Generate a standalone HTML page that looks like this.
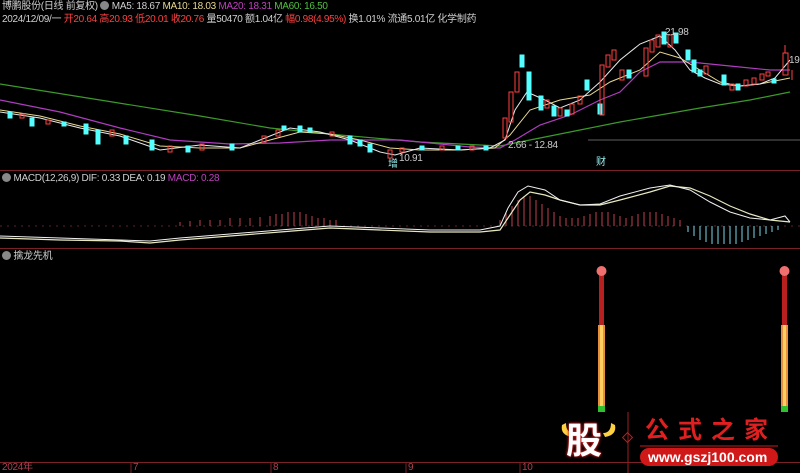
<!DOCTYPE html>
<html><head><meta charset="utf-8"><style>
html,body{margin:0;padding:0;background:#000;width:800px;height:473px;overflow:hidden;font-family:"Liberation Sans","Noto Sans CJK SC",sans-serif;}
.t{position:absolute;font-size:10px;white-space:nowrap;line-height:12px;letter-spacing:-0.3px}
</style></head><body>
<div style="position:relative;width:800px;height:473px">
<svg width="800" height="473" style="position:absolute;left:0;top:0">
<line x1="0" y1="170.5" x2="800" y2="170.5" stroke="#7a2028"/>
<line x1="0" y1="248.5" x2="800" y2="248.5" stroke="#7a2028"/>
<line x1="0" y1="462.5" x2="800" y2="462.5" stroke="#7a2028"/>
<line x1="628" y1="412" x2="628" y2="473" stroke="#a02020"/>
<polyline fill="none" stroke="#3c9a2a" stroke-width="1.2" points="0,84 100,100 200,116 270,128 340,135 420,142 500,146 540,138 580,130 620,122 660,115 700,108 750,100 790,92"/>
<polyline fill="none" stroke="#b03cc0" stroke-width="1.2" points="0,100 60,112 120,128 170,140 230,144 280,143 330,140 400,140 470,147 500,148 515,140 540,125 570,115 600,100 620,92 640,72 660,62 690,62 730,66 770,70 790,70"/>
<polyline fill="none" stroke="#e8d890" stroke-width="1" points="0,110 40,116 80,126 120,134 160,146 200,148 240,148 270,140 300,132 330,134 360,140 390,148 420,150 460,150 495,148 510,135 530,110 560,100 590,95 610,82 640,70 660,52 680,58 700,70 720,82 740,86 760,84 780,80 790,78"/>
<polyline fill="none" stroke="#e8e8e8" stroke-width="1" points="0,112 40,118 80,128 120,136 160,150 200,145 240,148 270,136 290,128 320,132 350,140 380,152 395,155 420,148 460,150 490,148 505,140 515,110 527,92 545,100 560,108 580,100 600,82 620,60 640,44 660,36 675,50 690,70 705,78 720,84 740,86 760,84 775,78 790,60"/>
<g stroke-width="1">
<g fill="#54ffff" stroke="#54ffff">
<rect x="8" y="112" width="4" height="6"/><rect x="30" y="118" width="4" height="8"/><rect x="62" y="122" width="4" height="4"/>
<rect x="84" y="124" width="4" height="10"/><rect x="96" y="130" width="4" height="14"/><rect x="124" y="136" width="4" height="8"/>
<rect x="150" y="140" width="4" height="10"/><rect x="186" y="146" width="4" height="6"/><rect x="230" y="144" width="4" height="6"/>
<rect x="282" y="126" width="4" height="4"/><rect x="298" y="126" width="4" height="6"/><rect x="308" y="128" width="4" height="4"/>
<rect x="348" y="136" width="4" height="8"/><rect x="358" y="140" width="4" height="6"/><rect x="368" y="144" width="4" height="8"/>
<rect x="420" y="146" width="4" height="4"/><rect x="456" y="146" width="4" height="4"/><rect x="484" y="146" width="4" height="4"/>
<rect x="520" y="55" width="4" height="12"/><rect x="527" y="72" width="4" height="28"/><rect x="539" y="96" width="4" height="14"/>
<rect x="552" y="106" width="4" height="10"/><rect x="565" y="110" width="4" height="6"/><rect x="585" y="80" width="4" height="10"/>
<rect x="598" y="104" width="4" height="10"/><rect x="627" y="70" width="4" height="8"/><rect x="662" y="32" width="4" height="12"/>
<rect x="674" y="33" width="4" height="10"/><rect x="686" y="50" width="4" height="10"/><rect x="692" y="60" width="4" height="12"/>
<rect x="698" y="70" width="4" height="6"/><rect x="722" y="75" width="4" height="10"/><rect x="736" y="84" width="4" height="6"/>
<rect x="772" y="79" width="4" height="4"/>
</g>
<g fill="none" stroke="#ff4040">
<rect x="20" y="114" width="4" height="4"/><rect x="46" y="120" width="4" height="4"/><rect x="110" y="130" width="4" height="6"/>
<rect x="168" y="146" width="4" height="6"/><rect x="200" y="144" width="4" height="6"/><rect x="262" y="136" width="4" height="6"/>
<rect x="276" y="130" width="4" height="6"/><rect x="330" y="132" width="4" height="4"/><rect x="388" y="150" width="4" height="8"/>
<rect x="400" y="148" width="4" height="4"/><rect x="440" y="146" width="4" height="4"/><rect x="470" y="146" width="4" height="4"/>
<rect x="503" y="118" width="4" height="20"/><rect x="509" y="92" width="4" height="30"/><rect x="515" y="72" width="4" height="20"/>
<rect x="545" y="100" width="4" height="8"/><rect x="558" y="108" width="4" height="8"/><rect x="570" y="104" width="4" height="10"/>
<rect x="578" y="96" width="4" height="8"/><rect x="600" y="65" width="4" height="50"/><rect x="606" y="55" width="4" height="12"/>
<rect x="612" y="50" width="4" height="10"/><rect x="620" y="70" width="4" height="10"/><rect x="644" y="48" width="4" height="28"/>
<rect x="650" y="40" width="4" height="12"/><rect x="656" y="35" width="4" height="12"/><rect x="668" y="35" width="4" height="12"/>
<rect x="704" y="66" width="4" height="8"/><rect x="730" y="84" width="4" height="6"/><rect x="744" y="80" width="4" height="6"/>
<rect x="752" y="78" width="4" height="6"/><rect x="760" y="74" width="4" height="6"/><rect x="766" y="72" width="4" height="4"/>
<rect x="783" y="53" width="5" height="22"/>
<line x1="785" y1="45" x2="785" y2="53"/><line x1="792" y1="70" x2="792" y2="80"/>
</g>
</g>
<line x1="588" y1="140" x2="800" y2="140" stroke="#c0c0c0" stroke-width="0.6"/>
<g stroke="#c04050" stroke-width="1">
<line x1="0" y1="226" x2="800" y2="226" stroke="#5a2030" stroke-dasharray="2,5"/>
<path d="M180 226v-4M190 226v-5M200 226v-6M210 226v-6M220 226v-6M230 226v-8M240 226v-8M250 226v-8M260 226v-9M270 226v-10M276 226v-12M282 226v-12M288 226v-14M294 226v-14M300 226v-14M306 226v-12M312 226v-10M318 226v-8M324 226v-8M330 226v-6M336 226v-6M500 226v-6M506 226v-14M512 226v-20M518 226v-26M524 226v-30M530 226v-30M536 226v-26M542 226v-22M548 226v-18M554 226v-14M560 226v-10M566 226v-8M572 226v-8M578 226v-8M584 226v-10M590 226v-12M596 226v-14M602 226v-14M608 226v-14M614 226v-12M620 226v-10M626 226v-8M632 226v-10M638 226v-12M644 226v-14M650 226v-14M656 226v-14M662 226v-12M668 226v-10M674 226v-8M680 226v-6"/>
<path stroke="#7ad8e8" d="M688 226v6M694 226v10M700 226v14M706 226v16M712 226v18M718 226v18M724 226v18M730 226v18M736 226v18M742 226v16M748 226v14M754 226v12M760 226v10M766 226v8M772 226v6M778 226v4"/>
</g>
<polyline fill="none" stroke="#e8e8c0" stroke-width="1.2" points="0,238 60,240 120,241 150,243 180,240 230,236 280,232 330,228 380,230 430,232 480,232 500,230 510,215 520,200 530,192 545,195 560,200 580,205 600,205 620,200 650,192 670,186 690,188 710,196 730,206 750,214 770,220 790,222"/>
<polyline fill="none" stroke="#f0f0f0" stroke-width="1" points="0,236 60,238 120,240 150,241 180,238 230,234 280,230 330,226 380,228 430,230 480,230 500,226 508,208 518,192 528,186 545,190 560,200 580,205 600,204 620,196 650,188 670,185 690,190 710,202 730,212 750,218 770,220 785,216 790,222"/>
<rect x="599" y="275" width="5" height="50" fill="#b82020"/>
<rect x="598" y="325" width="7" height="82" fill="#e89040"/>
<rect x="600" y="325" width="3" height="82" fill="#ffd060"/>
<rect x="598" y="406" width="7" height="6" fill="#30c030"/>
<circle cx="601.5" cy="271" r="5" fill="#f07070"/>
<rect x="782" y="275" width="5" height="50" fill="#b82020"/>
<rect x="781" y="325" width="7" height="82" fill="#e89040"/>
<rect x="783" y="325" width="3" height="82" fill="#ffd060"/>
<rect x="781" y="406" width="7" height="6" fill="#30c030"/>
<circle cx="784.5" cy="271" r="5" fill="#f07070"/>
<path d="M562 425 q-2 10 10 12 l2 -4 q-8 0 -8 -10z" fill="#ffd040"/>
<path d="M615 425 q2 10 -10 12 l-2 -4 q8 0 8 -10z" fill="#ffd040"/>
<rect x="640" y="448" width="138" height="18" rx="9" fill="#d01818"/>
<line x1="640" y1="446" x2="778" y2="446" stroke="#d01818"/>
<rect x="624" y="434" width="7" height="7" fill="none" stroke="#d01818" transform="rotate(45 627.5 437.5)"/>
<g stroke="#7a2028"><line x1="131" y1="462" x2="131" y2="473"/><line x1="271" y1="462" x2="271" y2="473"/><line x1="406" y1="462" x2="406" y2="473"/><line x1="520" y1="462" x2="520" y2="473"/></g>
</svg>
<div class="t" style="left:2px;top:1px;color:#d0d0d0">博鹏股份(日线 前复权) <span style="display:inline-block;width:9px;height:9px;border-radius:5px;background:#888;vertical-align:-1px"></span> MA5: 18.67 <span style="color:#e8d890">MA10: 18.03</span> <span style="color:#c040c0">MA20: 18.31</span> <span style="color:#50c040">MA60: 16.50</span></div>
<div class="t" style="left:2px;top:14px;color:#d0d0d0">2024/12/09/一 <span style="color:#ff4040">开20.64 高20.93 低20.01 收20.76</span> 量50470 额1.04亿 <span style="color:#ff4040">幅0.98(4.95%)</span> 换1.01% 流通5.01亿 化学制药</div>
<div class="t" style="left:665px;top:27px;color:#ccc">21.98</div>
<div class="t" style="left:789px;top:55px;color:#ccc">19</div>
<div class="t" style="left:399px;top:153px;color:#ccc">10.91</div>
<div class="t" style="left:388px;top:159px;color:#9ee;font-size:10px">增</div>
<div class="t" style="left:508px;top:140px;color:#ccc">2.66 - 12.84</div>
<div class="t" style="left:596px;top:157px;color:#9ee;font-size:10px">财</div>
<div class="t" style="left:2px;top:173px;color:#d0d0d0"><span style="display:inline-block;width:9px;height:9px;border-radius:5px;background:#888;vertical-align:-1px"></span> MACD(12,26,9) DIF: 0.33 DEA: 0.19 <span style="color:#c040c0">MACD: 0.28</span></div>
<div class="t" style="left:2px;top:251px;color:#d0d0d0"><span style="display:inline-block;width:9px;height:9px;border-radius:5px;background:#888;vertical-align:-1px"></span> 擒龙先机</div>
<div class="t" style="left:566px;top:421px;color:#fff;font-size:36px;line-height:40px;font-weight:bold;letter-spacing:0;text-shadow:0 0 3px #d02020,0 0 2px #d02020">股</div>
<div class="t" style="left:645px;top:418px;color:#e02020;font-size:24px;line-height:26px;letter-spacing:9px;font-weight:bold">公式之家</div>
<div class="t" style="left:648px;top:449px;color:#fff;font-size:14px;line-height:16px;font-weight:bold;letter-spacing:0">www.gszj100.com</div>
<div class="t" style="left:2px;top:462px;color:#b04050;font-size:10px">2024年</div>
<div class="t" style="left:133px;top:462px;color:#b04050;font-size:10px">7</div>
<div class="t" style="left:273px;top:462px;color:#b04050;font-size:10px">8</div>
<div class="t" style="left:408px;top:462px;color:#b04050;font-size:10px">9</div>
<div class="t" style="left:522px;top:462px;color:#b04050;font-size:10px">10</div>
</div>
</body></html>
